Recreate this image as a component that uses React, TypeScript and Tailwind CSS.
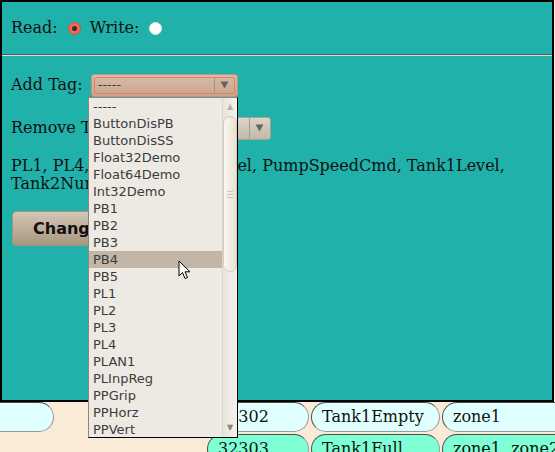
import React from "react";

const tags = [
  "-----",
  "ButtonDisPB",
  "ButtonDisSS",
  "Float32Demo",
  "Float64Demo",
  "Int32Demo",
  "PB1",
  "PB2",
  "PB3",
  "PB4",
  "PB5",
  "PL1",
  "PL2",
  "PL3",
  "PL4",
  "PLAN1",
  "PLInpReg",
  "PPGrip",
  "PPHorz",
  "PPVert",
];

const Pill = ({ children, className }: { children?: React.ReactNode; className: string }) => (
  <div
    className={`h-[30px] shrink-0 rounded-[15px] border border-[#4a4a4a] border-b-[#9a9a9a] border-r-[#9a9a9a] pl-[10px] flex items-center text-[16px] text-[#111] whitespace-nowrap ${className}`}
  >
    {children}
  </div>
);

const Radio = ({ checked }: { checked?: boolean }) =>
  checked ? (
    <span className="shrink-0 w-[13px] h-[13px] rounded-full bg-[#ef6a56] border border-[#c9503f] flex items-center justify-center">
      <span className="w-[5px] h-[5px] rounded-full bg-[#3a2a28]" />
    </span>
  ) : (
    <span className="shrink-0 block w-[13px] h-[13px] rounded-full bg-white border border-[#e6e6e6]" />
  );

const Arrow = () => (
  <svg width="9" height="8" viewBox="0 0 9 8">
    <path d="M0.5 0.5 L8.5 0.5 L4.5 7.5 Z" fill="#6a6460" />
  </svg>
);

export default function App() {
  return (
    <div className="w-[555px] h-[452px] relative overflow-hidden bg-[#faebd7] font-['DejaVu_Serif',serif]">
      {/* table rows behind the dialog */}
      <div className="pt-[402px] flex flex-col gap-[2px]">
        <div className="flex gap-[2px]">
          <Pill className="w-[74px] -ml-[20px] bg-[#e0ffff]" />
          <div className="w-[149px] shrink-0" />
          <Pill className="w-[102px] bg-[#e0ffff]">32302</Pill>
          <Pill className="w-[129px] bg-[#e0ffff]">Tank1Empty</Pill>
          <Pill className="w-[140px] bg-[#e0ffff]">zone1</Pill>
        </div>
        <div className="flex gap-[2px]">
          <div className="w-[205px] shrink-0" />
          <Pill className="w-[102px] bg-[#7fffd4]">32303</Pill>
          <Pill className="w-[129px] bg-[#7fffd4]">Tank1Full</Pill>
          <Pill className="w-[140px] bg-[#7fffd4]">zone1, zone2</Pill>
        </div>
      </div>

      {/* dialog */}
      <div className="absolute left-0 top-0 w-[554px] h-[402px] bg-[#20b2aa] border-2 border-black text-[16px] text-[#111]">
        <div className="pl-[9px] pt-[14px] h-[24px] box-content flex items-center">
          <span>Read:</span>
          <span className="ml-[10px] flex"><Radio checked /></span>
          <span className="ml-[9px]">Write:</span>
          <span className="ml-[10px] flex"><Radio /></span>
        </div>

        <div className="mt-[14px] border-t border-t-[#585858] border-b border-b-[#dcdcdc]" />

        <div className="pl-[9px] mt-[17px] flex items-center gap-[8px]">
          <span>Add Tag:</span>
          <div className="w-[147px] h-[23px] rounded-[3px] border border-[#b09a88] bg-gradient-to-b from-[#d9bcaa] to-[#c8a58f] p-[2px]">
            <div className="h-full rounded-[2px] border border-[#f2785c] flex items-center font-['DejaVu_Sans',sans-serif] text-[13px] text-[#3c3c3c]">
              <span className="flex-1 pl-[3px]">-----</span>
              <span className="h-full border-l border-[#a88e7c] w-[20px] flex items-center justify-center">
                <Arrow />
              </span>
            </div>
          </div>
        </div>

        <div className="pl-[9px] mt-[19px] flex items-center gap-[8px]">
          <span>Remove Tag:</span>
          <div className="w-[147px] h-[23px] rounded-[3px] border border-[#a8a090] bg-gradient-to-b from-[#dbd4c8] to-[#c2b9aa] flex items-center font-['DejaVu_Sans',sans-serif] text-[13px] text-[#3c3c3c]">
            <span className="flex-1 pl-[5px]">-----</span>
            <span className="h-full border-l border-[#a59c8e] w-[21px] flex items-center justify-center">
              <Arrow />
            </span>
          </div>
        </div>

        <p className="pl-[9px] mt-[17px] leading-[18px] whitespace-nowrap">
          PL1, PL4, PLAN1, PumpLevel, PumpSpeedCmd, Tank1Level,
          <br />
          Tank2Number
        </p>

        <div className="pl-[10px] mt-[18px]">
          <button className="h-[35px] px-[20px] rounded-[4px] border border-[#a4937e] bg-gradient-to-b from-[#d3c6b5] to-[#a9987f] font-['DejaVu_Sans',sans-serif] font-bold text-[16px] text-[#111]">
            Change Tags
          </button>
        </div>
      </div>

      {/* open dropdown list */}
      <div className="absolute left-[88px] top-[97px] w-[150px] h-[341px] bg-[#edeae4] border border-black border-l-[#8a8680] border-t-[#8a8680] flex font-['DejaVu_Sans',sans-serif] text-[13px] text-[#3c3c3c]">
        <ul className="flex-1 flex flex-col">
          {tags.map((t) => (
            <li
              key={t}
              className={`h-[17px] leading-[17px] pl-[4px] ${t === "PB4" ? "bg-[#c3b6a6]" : ""}`}
            >
              {t}
            </li>
          ))}
        </ul>
        <div className="w-[15px] bg-gradient-to-r from-[#e9e5de] to-[#f4f1eb] border-l border-[#dcd6cc] flex flex-col items-center">
          <span className="h-[18px] flex items-center text-[8px] text-[#b8b2a8]">▲</span>
          <div className="w-[14px] h-[156px] rounded-[7px] border border-[#d4cbbb] bg-gradient-to-r from-[#fbf8f2] to-[#e9e1d2] flex items-center justify-center">
            <div className="w-[6px] flex flex-col gap-[2px]">
              <span className="h-px bg-[#cbc3b4]" />
              <span className="h-px bg-[#cbc3b4]" />
              <span className="h-px bg-[#cbc3b4]" />
            </div>
          </div>
          <span className="flex-1" />
          <span className="h-[18px] flex items-center text-[8px] text-[#8a847a]">▼</span>
        </div>
      </div>

      {/* mouse pointer */}
      <svg className="absolute left-[178px] top-[260px]" width="14" height="21" viewBox="0 0 14 21">
        <path d="M1 1 L1 16 L4.5 12.5 L7 18.5 L9.5 17.5 L7 11.8 L12 11.8 Z" fill="white" stroke="black" strokeWidth="1" strokeLinejoin="round" />
      </svg>
    </div>
  );
}
